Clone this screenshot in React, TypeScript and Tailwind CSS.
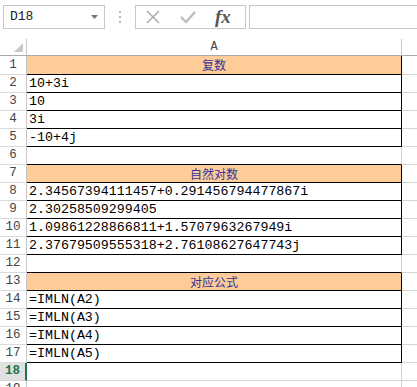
import React from 'react';

const mono = { fontFamily: '"Liberation Mono", "Noto Sans CJK SC", monospace' };

type Row = { n: number; text?: string; head?: boolean; boxed?: boolean; topEdge?: boolean };

const rows: Row[] = [
  { n: 1, text: '复数', head: true, boxed: true },
  { n: 2, text: '10+3i', boxed: true },
  { n: 3, text: '10', boxed: true },
  { n: 4, text: '3i', boxed: true },
  { n: 5, text: '-10+4j', boxed: true },
  { n: 6, topEdge: true },
  { n: 7, text: '自然对数', head: true, boxed: true },
  { n: 8, text: '2.34567394111457+0.291456794477867i', boxed: true },
  { n: 9, text: '2.30258509299405', boxed: true },
  { n: 10, text: '1.09861228866811+1.5707963267949i', boxed: true },
  { n: 11, text: '2.37679509555318+2.76108627647743j', boxed: true },
  { n: 12, topEdge: true },
  { n: 13, text: '对应公式', head: true, boxed: true },
  { n: 14, text: '=IMLN(A2)', boxed: true },
  { n: 15, text: '=IMLN(A3)', boxed: true },
  { n: 16, text: '=IMLN(A4)', boxed: true },
  { n: 17, text: '=IMLN(A5)', boxed: true },
  { n: 18 },
  { n: 19 },
];

function SheetRow({ r }: { r: Row }) {
  const selected = r.n === 18;
  const height = r.n === 1 ? 'h-[19px]' : 'h-[18px]';
  return (
    <div className={`flex ${height} shrink-0`}>
      <div
        className={`w-[27px] shrink-0 flex items-center justify-center border-b border-r text-[12.5px] ${
          selected
            ? 'bg-[#e1e1e1] border-b-[#d4d4d4] border-r-[#217346] border-r-2 text-[#217346] font-bold'
            : 'border-b-[#dadada] border-r-[#c6c6c6] text-[#444]'
        }`}
        style={mono}
      >
        {r.n}
      </div>
      <div
        className={`w-[375px] shrink-0 flex items-center border-b border-r ${
          r.boxed || r.topEdge ? 'border-b-black' : 'border-b-[#d4d4d4]'
        } ${r.boxed ? 'border-r-black' : 'border-r-[#d4d4d4]'} ${
          r.head ? 'bg-[#fdcc99] justify-center text-[#333399] text-[12px]' : 'pl-[2px] text-black text-[13.3px]'
        }`}
        style={r.head ? { fontFamily: '"Noto Sans CJK SC", sans-serif' } : mono}
      >
        {r.text}
      </div>
      <div className="flex-1 border-b border-[#d4d4d4]" />
    </div>
  );
}

export default function App() {
  return (
    <div className="w-[417px] h-[387px] overflow-hidden bg-white flex flex-col" style={{ fontFamily: '"Liberation Sans", sans-serif' }}>
      <div className="h-[39px] shrink-0 flex items-start pt-[5px] pl-[3px]">
        <div className="w-[102px] h-[24px] border border-[#c6c6c6] flex items-center justify-between pl-[6px] pr-[5px]">
          <span className="text-[13px] text-[#222]" style={mono}>D18</span>
          <svg width="8" height="5" viewBox="0 0 8 5"><path d="M0 0h7L3.5 4z" fill="#777" /></svg>
        </div>
        <div className="w-[30px] h-[24px] flex flex-col items-center justify-center gap-[3px]">
          <div className="w-[2px] h-[2px] bg-[#b8b8b8]" />
          <div className="w-[2px] h-[2px] bg-[#b8b8b8]" />
          <div className="w-[2px] h-[2px] bg-[#b8b8b8]" />
        </div>
        <div className="w-[111px] h-[24px] border border-[#c6c6c6] flex items-center pl-[9px] gap-[18px]">
          <svg width="16" height="16" viewBox="0 0 16 16"><path d="M2 2l12 12M14 2L2 14" stroke="#adadad" strokeWidth="1.6" /></svg>
          <svg width="18" height="16" viewBox="0 0 18 16"><path d="M2 8l5 5L16 3" stroke="#bdbdbd" strokeWidth="2.4" fill="none" /></svg>
          <span className="text-[19px] italic font-bold text-[#555] leading-none -mt-[2px]" style={{ fontFamily: '"Liberation Serif", serif' }}>fx</span>
        </div>
        <div className="ml-[3px] flex-1 h-[24px] border border-r-0 border-[#c6c6c6]" />
      </div>
      <div className="h-[17px] shrink-0 flex border-b border-[#ababab]">
        <div className="w-[27px] shrink-0 border-r border-[#c6c6c6] flex items-end justify-end pr-[3px] pb-[3px]">
          <svg width="9" height="9" viewBox="0 0 9 9"><path d="M9 0v9H0z" fill="#c8c8c8" /></svg>
        </div>
        <div className="w-[375px] shrink-0 border-r border-[#c6c6c6] flex items-center justify-center text-[12px] text-[#444]" style={mono}>
          A
        </div>
        <div className="flex-1" />
      </div>
      {rows.map((r) => (
        <SheetRow key={r.n} r={r} />
      ))}
    </div>
  );
}
